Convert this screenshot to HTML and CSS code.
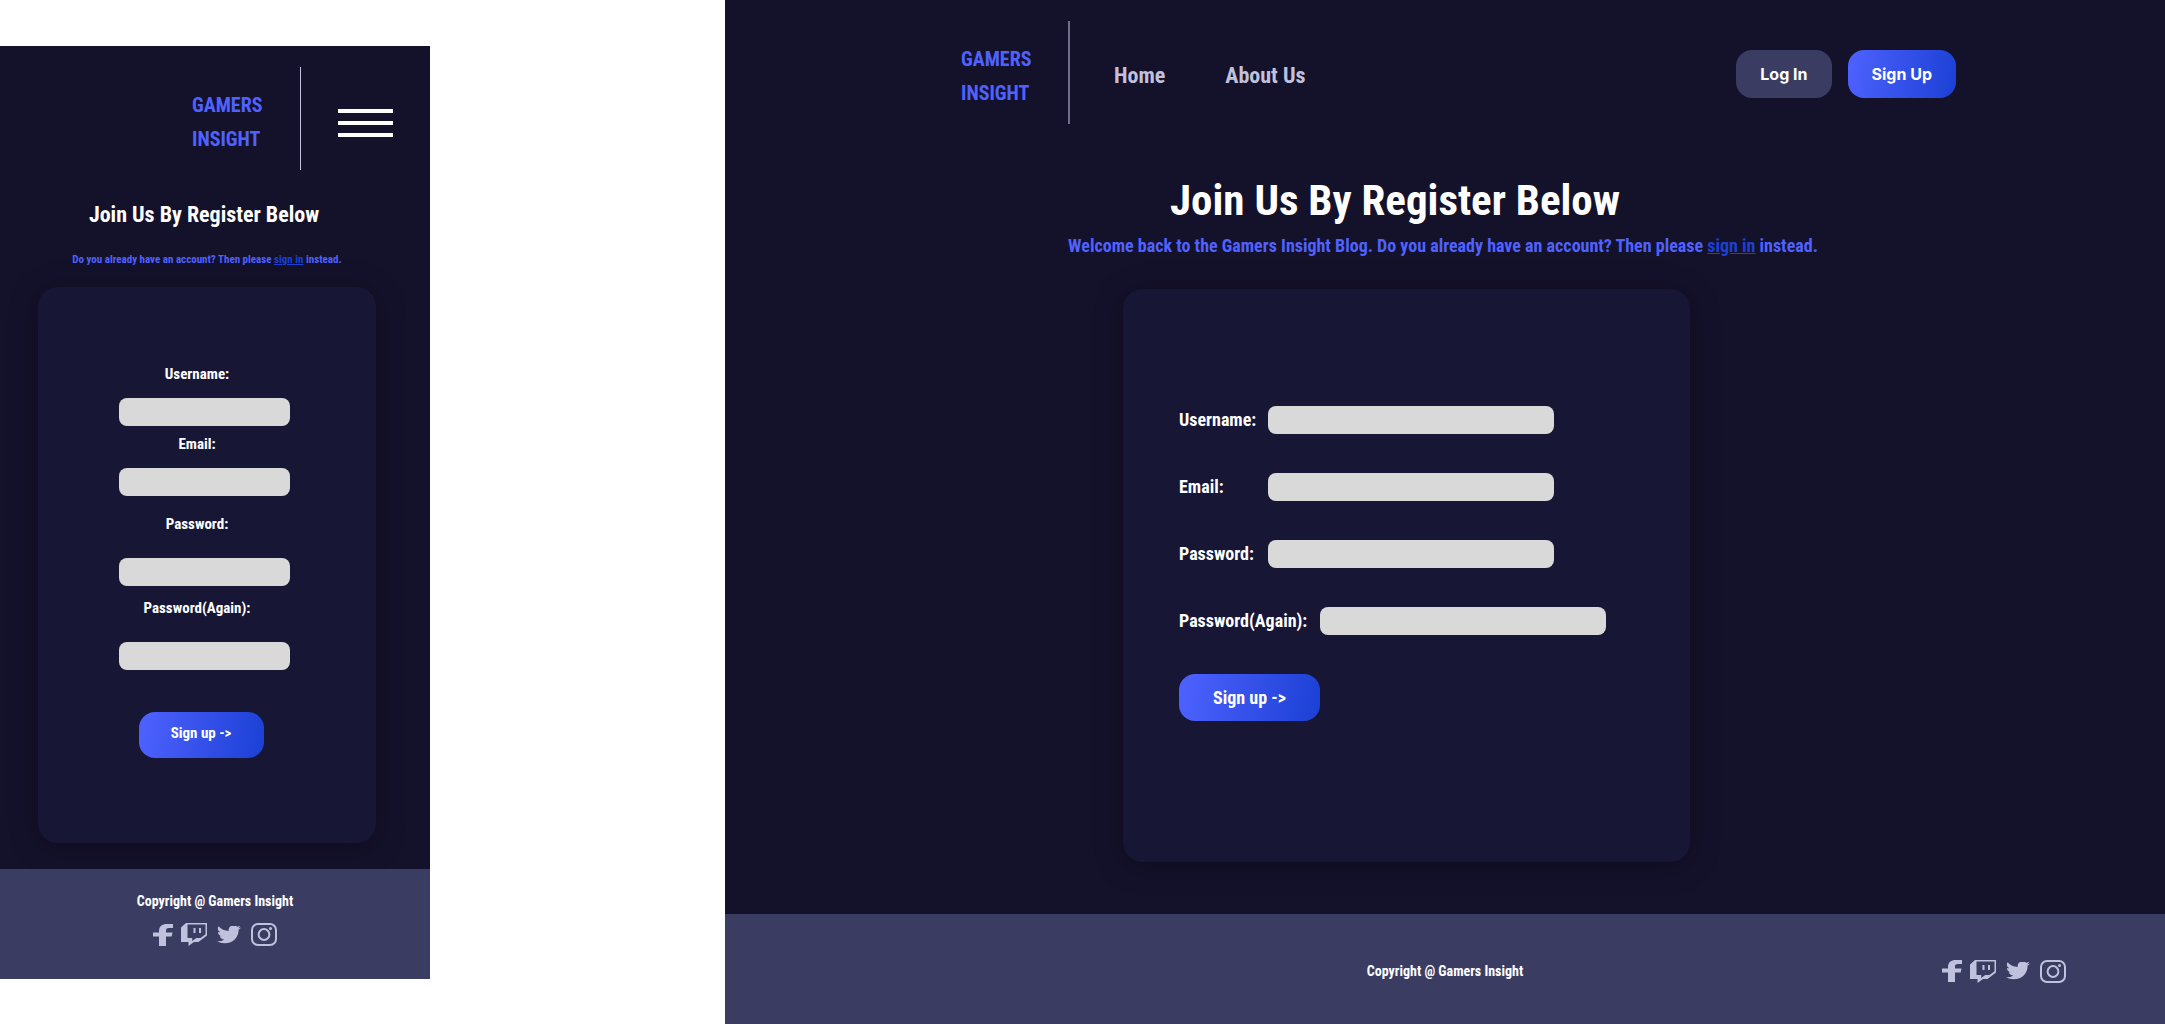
FILE: index.html
```html
<!DOCTYPE html>
<html lang="en">
<head>
<meta charset="utf-8">
<meta name="viewport" content="width=device-width, initial-scale=1">
<title>Gamers Insight - Register</title>
<link rel="stylesheet" href="styles.css">
</head>
<body>
<svg class="sprite" aria-hidden="true">
  <symbol id="facebook" viewBox="0 0 20 22" preserveAspectRatio="none"><path d="M6 22V12.500H0V8.500h6V7c0-4.500 3-7 8-7h6v4h-4c-2 0-3 .8-3 2.500v2h6.500l-.8 4H13V22z"/></symbol>
  <symbol id="twitch" viewBox="0 0 26 23" preserveAspectRatio="none"><path fill-rule="evenodd" d="M5 0h21v12.500L17.500 19H13l-5.500 4v-4H0V4.500zM6.500 1.500v13.500h4.700v3l4-3h4.300l5-3.700V1.500zM12.500 5h2v5h-2zM18 5h2v5h-2z"/></symbol>
  <symbol id="twitter" viewBox="0 3 24 19.500" preserveAspectRatio="none"><path d="M23.950 4.570a10 10 0 0 1-2.820.770 4.960 4.960 0 0 0 2.160-2.720c-.950.560-2 .960-3.130 1.190a4.920 4.920 0 0 0-8.380 4.480A13.930 13.930 0 0 1 1.640 3.160a4.920 4.920 0 0 0 1.520 6.570 4.900 4.900 0 0 1-2.230-.610v.060a4.920 4.920 0 0 0 3.950 4.830 5 5 0 0 1-2.210.080 4.940 4.940 0 0 0 4.600 3.420A9.870 9.870 0 0 1 0 19.540a14 14 0 0 0 7.550 2.210c9.050 0 14-7.500 14-13.980 0-.210 0-.420-.020-.630a9.940 9.940 0 0 0 2.460-2.550z"/></symbol>
  <symbol id="instagram" viewBox="0 0 26 23" preserveAspectRatio="none"><rect x="1" y="1" width="24" height="21" rx="6" fill="none" stroke="currentColor" stroke-width="2"/><circle cx="13" cy="11.500" r="5.400" fill="none" stroke="currentColor" stroke-width="2"/><circle cx="19.500" cy="5.500" r="1.500"/></symbol>
</svg>

<div class="board">
  <section class="screen screen--mobile" aria-label="Mobile">
    <header class="topbar">
      <a class="logo" href="#">GAMERS<br>INSIGHT</a>
      <span class="divider"></span>
      <button class="burger" type="button" aria-label="Menu"><span></span><span></span><span></span></button>
    </header>
    <main class="content">
      <h1 class="title">Join Us By Register Below</h1>
      <p class="lead">Do you already have an account? Then please <a href="#">sign in</a> instead.</p>
      <form class="card">
        <div class="field field--first"><label for="m-user">Username:</label><input id="m-user" type="text"></div>
        <div class="field"><label for="m-mail">Email:</label><input id="m-mail" type="email"></div>
        <div class="field field--tall"><label for="m-pass">Password:</label><input id="m-pass" type="password"></div>
        <div class="field field--tall"><label for="m-again">Password(Again):</label><input id="m-again" type="password"></div>
        <button class="submit" type="button">Sign up -&gt;</button>
      </form>
    </main>
    <footer class="footer">
      <p class="copyright">Copyright @ Gamers Insight</p>
      <nav class="social" aria-label="Social">
        <a href="#" aria-label="Facebook"><svg class="icon icon--fb"><use href="#facebook"/></svg></a>
        <a href="#" aria-label="Twitch"><svg class="icon"><use href="#twitch"/></svg></a>
        <a href="#" aria-label="Twitter"><svg class="icon icon--tw"><use href="#twitter"/></svg></a>
        <a href="#" aria-label="Instagram"><svg class="icon"><use href="#instagram"/></svg></a>
      </nav>
    </footer>
  </section>

  <section class="screen screen--desktop" aria-label="Desktop">
    <header class="topbar">
      <a class="logo" href="#">GAMERS<br>INSIGHT</a>
      <span class="divider"></span>
      <nav class="menu" aria-label="Main"><a href="#">Home</a><a href="#">About Us</a></nav>
      <div class="actions">
        <button class="btn btn--muted" type="button">Log In</button>
        <button class="btn btn--primary" type="button">Sign Up</button>
      </div>
    </header>
    <main class="content">
      <h1 class="title">Join Us By Register Below</h1>
      <p class="lead">Welcome back to the Gamers Insight Blog. Do you already have an account? Then please <a href="#">sign in</a> instead.</p>
      <form class="card">
        <div class="field"><label for="d-user">Username:</label><input id="d-user" type="text"></div>
        <div class="field"><label for="d-mail">Email:</label><input id="d-mail" type="email"></div>
        <div class="field"><label for="d-pass">Password:</label><input id="d-pass" type="password"></div>
        <div class="field field--wide"><label for="d-again">Password(Again):</label><input id="d-again" type="password"></div>
        <button class="submit" type="button">Sign up -&gt;</button>
      </form>
    </main>
    <footer class="footer">
      <p class="copyright">Copyright @ Gamers Insight</p>
      <nav class="social" aria-label="Social">
        <a href="#" aria-label="Facebook"><svg class="icon icon--fb"><use href="#facebook"/></svg></a>
        <a href="#" aria-label="Twitch"><svg class="icon"><use href="#twitch"/></svg></a>
        <a href="#" aria-label="Twitter"><svg class="icon icon--tw"><use href="#twitter"/></svg></a>
        <a href="#" aria-label="Instagram"><svg class="icon"><use href="#instagram"/></svg></a>
      </nav>
    </footer>
  </section>
</div>
</body>
</html>
```

FILE: styles.css
```css
:root {
  --night: #14112b;
  --card: #171635;
  --slate: #3b3c61;
  --blue: #4f62ff;
  --royal: #1b40d4;
  --mist: #c0c1dc;
  --display: "Liberation Sans Narrow", "Arial Narrow", "Roboto Condensed", "Open Sans Condensed", sans-serif;
}

* { box-sizing: border-box; }
body { margin: 0; background: #fff; font-family: var(--display); font-weight: 700; color: #fff; }
h1, p { margin: 0; }
a { color: inherit; text-decoration: none; }
button, input { border: 0; padding: 0; font: inherit; color: inherit; }
.sprite { display: none; }

.board { display: grid; grid-template-columns: 430fr 295fr 1440fr; align-items: start; min-height: 100vh; }
.screen { display: flex; flex-direction: column; background: var(--night); }
.screen--mobile { grid-column: 1; margin-top: 46px; }
.screen--desktop { grid-column: 3; min-height: 100vh; }

/* Header */
.topbar { display: flex; align-items: center; padding-top: 21px; }
.logo { color: var(--blue); font-size: 20px; line-height: 34px; width: 70px; padding-top: 6px; }
.divider { width: 1px; height: 103px; background: var(--mist); }
.burger { display: flex; flex-direction: column; gap: 8px; width: 55px; background: none; }
.burger span { height: 4px; background: #fff; }
.menu { display: flex; gap: 60px; padding-top: 6px; color: var(--mist); font-size: 22px; line-height: 34px; }
.actions { display: flex; gap: 16px; margin-left: auto; padding-top: 2px; }
.btn { height: 48px; padding: 0 24px; border-radius: 16px; font: 700 16px/24px Inter, sans-serif; white-space: nowrap; }
.btn--muted { background: var(--slate); }
.btn--primary, .submit { background: linear-gradient(100deg, var(--blue), var(--royal)); }

/* Content */
.content { display: flex; flex-direction: column; flex: 1; }
.title { white-space: nowrap; text-align: center; }
.lead { color: var(--blue); text-align: center; white-space: nowrap; }
.lead a { color: var(--royal); text-decoration: underline; }
.card { display: flex; flex-direction: column; background: var(--card); border-radius: 20px; box-shadow: 0 4px 30px rgba(0, 0, 0, .3); }
.field { display: flex; }
.field input { background: #d9d9d9; border-radius: 8px; height: 28px; padding: 0 8px; color: var(--night); }
.submit { border-radius: 16px; }

/* Footer */
.footer { background: var(--slate); height: 110px; }
.copyright { font-size: 14px; line-height: 20px; }
.social { display: flex; align-items: center; color: var(--mist); }
.social a { display: flex; }
.icon { width: 26px; height: 23px; fill: currentColor; }
.icon--fb { width: 20px; height: 22px; margin-right: 8px; }
.icon--tw { width: 24px; height: 18px; margin: 0 10px; }

/* Mobile */
.screen--mobile .topbar { justify-content: flex-end; padding-right: 37px; }
.screen--mobile .divider { margin: 0 37px 0 38px; }
.screen--mobile .burger { margin-top: 8px; }
.screen--mobile .content { padding: 28px 54px 26px 38px; }
.screen--mobile .title { font-size: 22px; line-height: 34px; margin-right: 6px; }
.screen--mobile .lead { font-size: 11px; line-height: 16px; margin-top: 20px; }
.screen--mobile .card { align-items: center; margin-top: 19px; padding: 77px 6px 85px 0; }
.screen--mobile .field { flex-direction: column; align-items: center; gap: 14px; margin-bottom: 18px; }
.screen--mobile .field label { font-size: 15px; line-height: 20px; padding-right: 14px; }
.screen--mobile .field--first { margin-bottom: 8px; }
.screen--mobile .field--tall { gap: 24px; margin-bottom: 12px; }
.screen--mobile .field input { width: 171px; }
.screen--mobile .submit { width: 125px; height: 46px; margin: 30px 6px 0 0; padding-bottom: 4px; font-size: 15px; }
.screen--mobile .footer { display: flex; flex-direction: column; align-items: center; padding-top: 22px; gap: 12px; }

/* Desktop */
.screen--desktop .topbar { padding-left: 236px; padding-right: 209px; }
.screen--desktop .divider { width: 2px; margin: 0 44px 0 37px; background: #716d8a; }
.screen--desktop .content { padding-bottom: 52px; }
.screen--desktop .title { font-size: 43px; line-height: 64px; margin-top: 44px; padding-right: 100px; }
.screen--desktop .lead { font-size: 18px; line-height: 28px; padding-right: 4px; }
.screen--desktop .card { width: 567px; min-height: 573px; margin-top: 29px; margin-left: 398px; padding: 117px 56px; gap: 39px; }
.screen--desktop .field label { font-size: 18px; line-height: 28px; min-width: 89px; }
.screen--desktop .field--wide label { min-width: 141px; }
.screen--desktop .field input { width: 286px; }
.screen--desktop .submit { width: 141px; height: 47px; font-size: 18px; }
.screen--desktop .footer { display: grid; grid-template-columns: 1fr auto 1fr; align-items: center; padding: 4px 99px 0; }
.screen--desktop .copyright { grid-column: 2; }
.screen--desktop .social { justify-self: end; }
```
